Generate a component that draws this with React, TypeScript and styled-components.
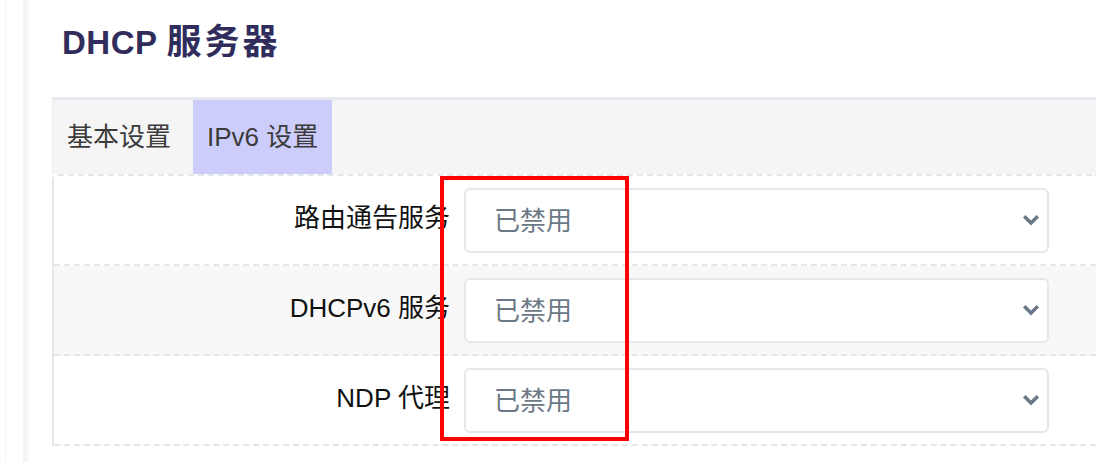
import React from "react";
import styled, { createGlobalStyle } from "styled-components";

const GlobalStyle = createGlobalStyle`
	html, body {
		margin: 0;
		padding: 0;
		background: #ffffff;
	}
	body {
		font-family: "Liberation Sans", "Noto Sans CJK SC", sans-serif;
	}
`;

const Page = styled.div`
	position: relative;
	display: flex;
	width: 1096px;
	height: 462px;
	overflow: hidden;
	background: #ffffff;
`;

// faint sidebar edge on the far left
const Gutter = styled.div`
	flex: 0 0 52px;
	background:
		linear-gradient(90deg, transparent 5px, #f6f6f6 5px, #f6f6f6 6px, transparent 6px),
		linear-gradient(90deg, transparent 23px, #f3f3f3 23px, #fafafa 29px, transparent 29px);
`;

const Main = styled.div`
	flex: 1;
	min-width: 0;
	display: flex;
	flex-direction: column;
`;

const Title = styled.h2`
	margin: 22px 0 0 10px;
	height: 75px;
	font-size: 33px;
	line-height: 40px;
	font-weight: 700;
	letter-spacing: 0.5px;
	color: #302d5c;
	white-space: nowrap;
`;

const TitleCjk = styled.span`
	font-size: 35px;
	letter-spacing: 3px;
`;

const TabBar = styled.div`
	display: flex;
	gap: 8px;
	height: 74px;
	background: #f5f5f5;
	border-top: 3px solid #e6e9ed;
	border-left: 1px solid #eaedf0;
`;

const Tab = styled.div<{ active?: boolean }>`
	display: flex;
	align-items: center;
	padding: 0 14px 5px;
	font-size: 26px;
	color: #3b3b3b;
	background: ${({ active }) => (active ? "#cccdfa" : "transparent")};
`;

const Card = styled.div`
	display: flex;
	flex-direction: column;
	border-top: 2px dashed #e3e7eb;
	border-left: 2px solid #e4e8ec;
	border-top-left-radius: 6px;
`;

const Row = styled.div<{ shaded?: boolean }>`
	display: grid;
	grid-template-columns: 394px 585px 1fr;
	column-gap: 16px;
	align-items: center;
	height: 88px;
	border-bottom: 2px dashed #e3e7eb;
	background: ${({ shaded }) => (shaded ? "#f8f8f8" : "#ffffff")};
`;

const FillerRow = styled.div`
	flex: 1;
	height: 60px;
	background: #f8f8f8;
`;

const Label = styled.label`
	text-align: right;
	font-size: 26px;
	color: #111111;
	white-space: nowrap;
	margin-right: -2px;
	padding-bottom: 10px;
`;

const Select = styled.div`
	box-sizing: border-box;
	display: flex;
	align-items: center;
	justify-content: space-between;
	height: 65px;
	padding: 0 7px 0 28px;
	border: 2px solid #e4e7eb;
	border-radius: 6px;
	background: #ffffff;
	font-size: 26px;
	color: #6b7886;
`;

const SelectValue = styled.span`
	padding-bottom: 3px;
`;

const Chevron = () => (
	<svg width="18" height="12" viewBox="0 0 18 12" fill="none">
		<path d="M2.2 2.2 L9 9 L15.8 2.2" stroke="#6b7886" strokeWidth="3.6" />
	</svg>
);

const Highlight = styled.div`
	position: absolute;
	left: 440px;
	top: 176px;
	width: 189px;
	height: 265px;
	box-sizing: border-box;
	border: 4px solid #ff0000;
	pointer-events: none;
`;

const rows = [
	{ label: "路由通告服务", value: "已禁用" },
	{ label: "DHCPv6 服务", value: "已禁用" },
	{ label: "NDP 代理", value: "已禁用" },
];

export default function App() {
	return (
		<>
			<GlobalStyle />
			<Page>
				<Gutter />
				<Main>
					<Title>
						DHCP <TitleCjk>服务器</TitleCjk>
					</Title>
					<TabBar>
						<Tab>基本设置</Tab>
						<Tab active>IPv6 设置</Tab>
					</TabBar>
					<Card>
						{rows.map((row, index) => (
							<Row key={index} shaded={index % 2 === 1}>
								<Label>{row.label}</Label>
								<Select>
									<SelectValue>{row.value}</SelectValue>
									<Chevron />
								</Select>
								<div />
							</Row>
						))}
						<FillerRow />
					</Card>
				</Main>
				<Highlight />
			</Page>
		</>
	);
}
